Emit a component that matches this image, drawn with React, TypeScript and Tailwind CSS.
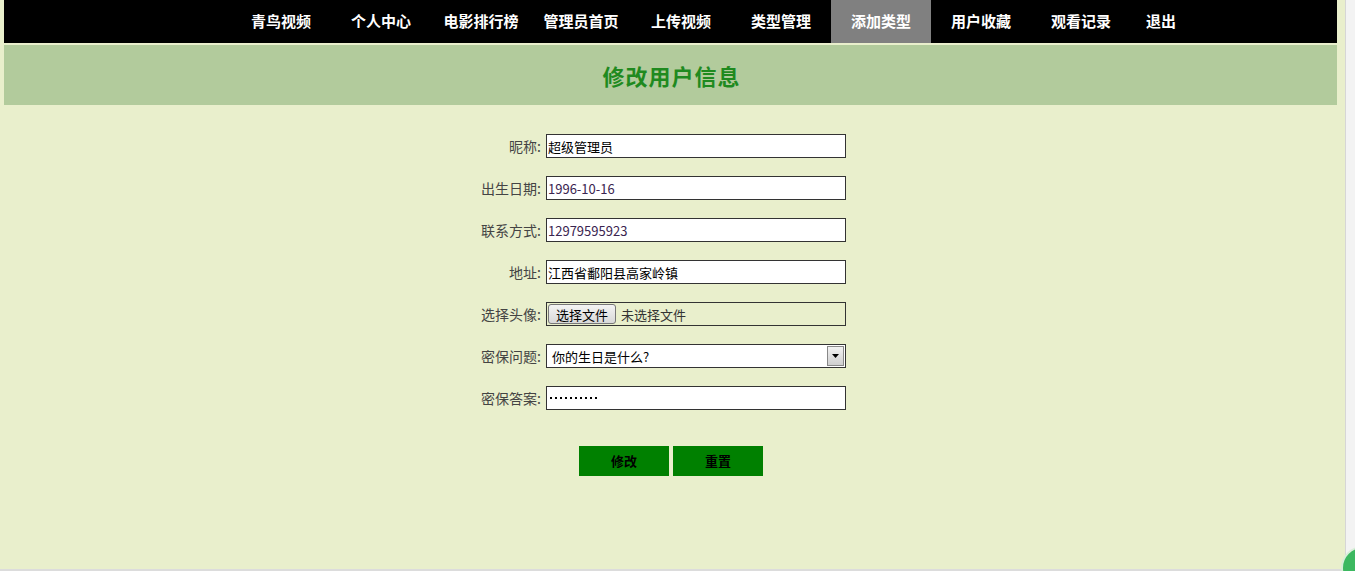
import React from 'react';

const navItems = ['青鸟视频', '个人中心', '电影排行榜', '管理员首页', '上传视频', '类型管理', '添加类型', '用户收藏', '观看记录', '退出'];
const active = '添加类型';

const cjk = { fontFamily: '"Noto Sans CJK SC", "Noto Sans", sans-serif' };

function Row({ label, children }: { label: string; children: React.ReactNode }) {
  return (
    <div className="flex items-center h-[24px]">
      <div className="w-[538px] text-right text-[14px] text-[#444] pr-[1px] leading-none">{label}:</div>
      <div className="ml-[4px] w-[300px] h-[24px]">{children}</div>
    </div>
  );
}

function TextBox({ value, color = 'text-black' }: { value: string; color?: string }) {
  return (
    <div className={`h-full w-full bg-white border border-[#333] flex items-center px-[1px] text-[13px] ${color} leading-none`}>
      {value}
    </div>
  );
}

export default function App() {
  return (
    <div className="relative w-[1355px] h-[571px] bg-[#e9efcc] overflow-hidden flex" style={cjk}>
      <div className="w-[1345px] h-[569px] pl-[4px] pr-[8px]">
        <nav className="h-[43px] bg-black flex pl-[227px]">
          {navItems.map((item) => (
            <div
              key={item}
              className={`${item === '退出' ? 'w-[60px]' : 'w-[100px]'} h-full flex items-center justify-center text-white font-bold text-[15px] ${
                item === active ? 'bg-[#808080]' : ''
              }`}
            >
              {item}
            </div>
          ))}
        </nav>
        <div className="mt-[2px] h-[60px] bg-[#b2cb9c] flex items-center justify-center pl-[2px]">
          <h1 className="text-[22px] font-bold text-[#1f8a1f] tracking-[1px] leading-none">修改用户信息</h1>
        </div>

        <div className="mt-[29px] flex flex-col gap-[18px]">
          <Row label="昵称">
            <TextBox value="超级管理员" />
          </Row>
          <Row label="出生日期">
            <TextBox value="1996-10-16" color="text-[#3a2450]" />
          </Row>
          <Row label="联系方式">
            <TextBox value="12979595923" color="text-[#3a2450]" />
          </Row>
          <Row label="地址">
            <TextBox value="江西省鄱阳县高家岭镇" />
          </Row>
          <Row label="选择头像">
            <div className="h-full w-full border border-[#333] flex items-center px-[1px] gap-[5px] text-[13px] leading-none">
              <div className="h-[20px] px-[7px] flex items-center bg-gradient-to-b from-[#f4f4f4] to-[#d8d8d8] border border-[#777] rounded-[3px] text-black">
                选择文件
              </div>
              <span className="text-[#333]">未选择文件</span>
            </div>
          </Row>
          <Row label="密保问题">
            <div className="h-full w-full bg-white border border-[#333] flex items-center text-[13px] leading-none">
              <span className="flex-1 pl-[5px] text-black">你的生日是什么?</span>
              <div className="w-[17px] h-[20px] mr-[1px] border border-[#888] bg-gradient-to-b from-[#f2f2f2] to-[#cfcfcf] flex items-center justify-center">
                <svg width="7" height="4" viewBox="0 0 7 4">
                  <path d="M0 0h7L3.5 4z" fill="#000" />
                </svg>
              </div>
            </div>
          </Row>
          <Row label="密保答案">
            <div className="h-full w-full bg-white border border-[#333] flex items-center pl-[3px] gap-[3px]">
              {Array.from({ length: 10 }).map((_, i) => (
                <span key={i} className="w-[2px] h-[2px] bg-black" />
              ))}
            </div>
          </Row>
        </div>

        <div className="mt-[36px] flex pl-[575px] gap-[4px]">
          <button className="w-[90px] h-[30px] bg-[#008000] text-black font-bold text-[13px]">修改</button>
          <button className="w-[90px] h-[30px] bg-[#008000] text-black font-bold text-[13px]">重置</button>
        </div>
      </div>

      <div className="w-[10px] h-[569px] bg-[#f3f3f3] border-l border-[#d6d6d6]" />
      <div className="absolute left-0 bottom-0 w-full h-[2px] bg-[#dcdcdc]" />
      <div className="absolute z-10 left-[1341px] top-[546px] w-[44px] h-[44px] rounded-full bg-[#3cb860] border-2 border-[#d8eed8]" />
    </div>
  );
}
